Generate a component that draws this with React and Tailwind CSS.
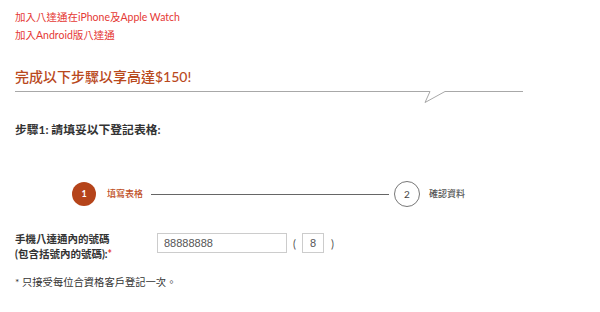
import React from "react";

const font = { fontFamily: '"Lato", "Noto Sans CJK TC", sans-serif' };

const App = () => {
  return (
    <div className="w-[600px] h-[312px] bg-white text-[#333] overflow-hidden" style={font}>
      <div className="pl-[15px] pt-[8px]">
        <div className="text-[10.5px] leading-[18px] text-[#e53935]">
          <a className="block">加入八達通在iPhone及Apple Watch</a>
          <a className="block">加入Android版八達通</a>
        </div>

        <h2 className="mt-[23px] text-[14px] leading-[20px] font-medium text-[#b9491d]">完成以下步驟以享高達$150!</h2>

        <svg className="block mt-[4px]" width="509" height="13" viewBox="0 0 509 13">
          <path d="M0 0.5 H415 L410 11.5 L430 0.5 H508" fill="none" stroke="#a8a8a8" strokeWidth="1" />
        </svg>

        <h3 className="mt-[17px] text-[11.8px] leading-[18px] font-bold text-[#333]">步驟1: 請填妥以下登記表格:</h3>

        <div className="mt-[42px] flex items-center pl-[57px]">
          <div className="w-[24px] h-[24px] rounded-full bg-[#b5441a] text-white text-[9px] font-bold flex items-center justify-center">
            1
          </div>
          <span className="ml-[11px] text-[9px] font-medium text-[#c0501f]">填寫表格</span>
          <div className="ml-[8px] w-[238px] h-px bg-[#666]" />
          <div className="ml-[5px] w-[26px] h-[26px] rounded-full border border-[#777] text-[10px] text-[#444] flex items-center justify-center">
            2
          </div>
          <span className="ml-[9px] text-[9px] font-medium text-[#555]">確認資料</span>
        </div>

        <div className="mt-[25px] flex items-start">
          <label className="w-[142px] text-[10.5px] leading-[15px] font-bold text-[#333]">
            手機八達通內的號碼
            <br />
            (包含括號內的號碼):<span className="text-[#e53935]">*</span>
          </label>
          <input
            readOnly
            value="88888888"
            className="mt-[1px] w-[130px] h-[20px] border border-[#ccc] px-[6px] text-[11px] text-[#555] outline-none"
            style={{ fontFamily: '"Liberation Sans", sans-serif' }}
          />
          <span className="mt-[4px] ml-[6px] text-[11px] text-[#555]">(</span>
          <input
            readOnly
            value="8"
            className="mt-[1px] ml-[6px] w-[22px] h-[20px] border border-[#ccc] text-center text-[11px] text-[#555] outline-none"
            style={{ fontFamily: '"Liberation Sans", sans-serif' }}
          />
          <span className="mt-[4px] ml-[7px] text-[11px] text-[#555]">)</span>
        </div>

        <p className="mt-[12px] text-[10.3px] leading-[16px] text-[#333]">* 只接受每位合資格客戶登記一次。</p>
      </div>
    </div>
  );
};

export default App;
